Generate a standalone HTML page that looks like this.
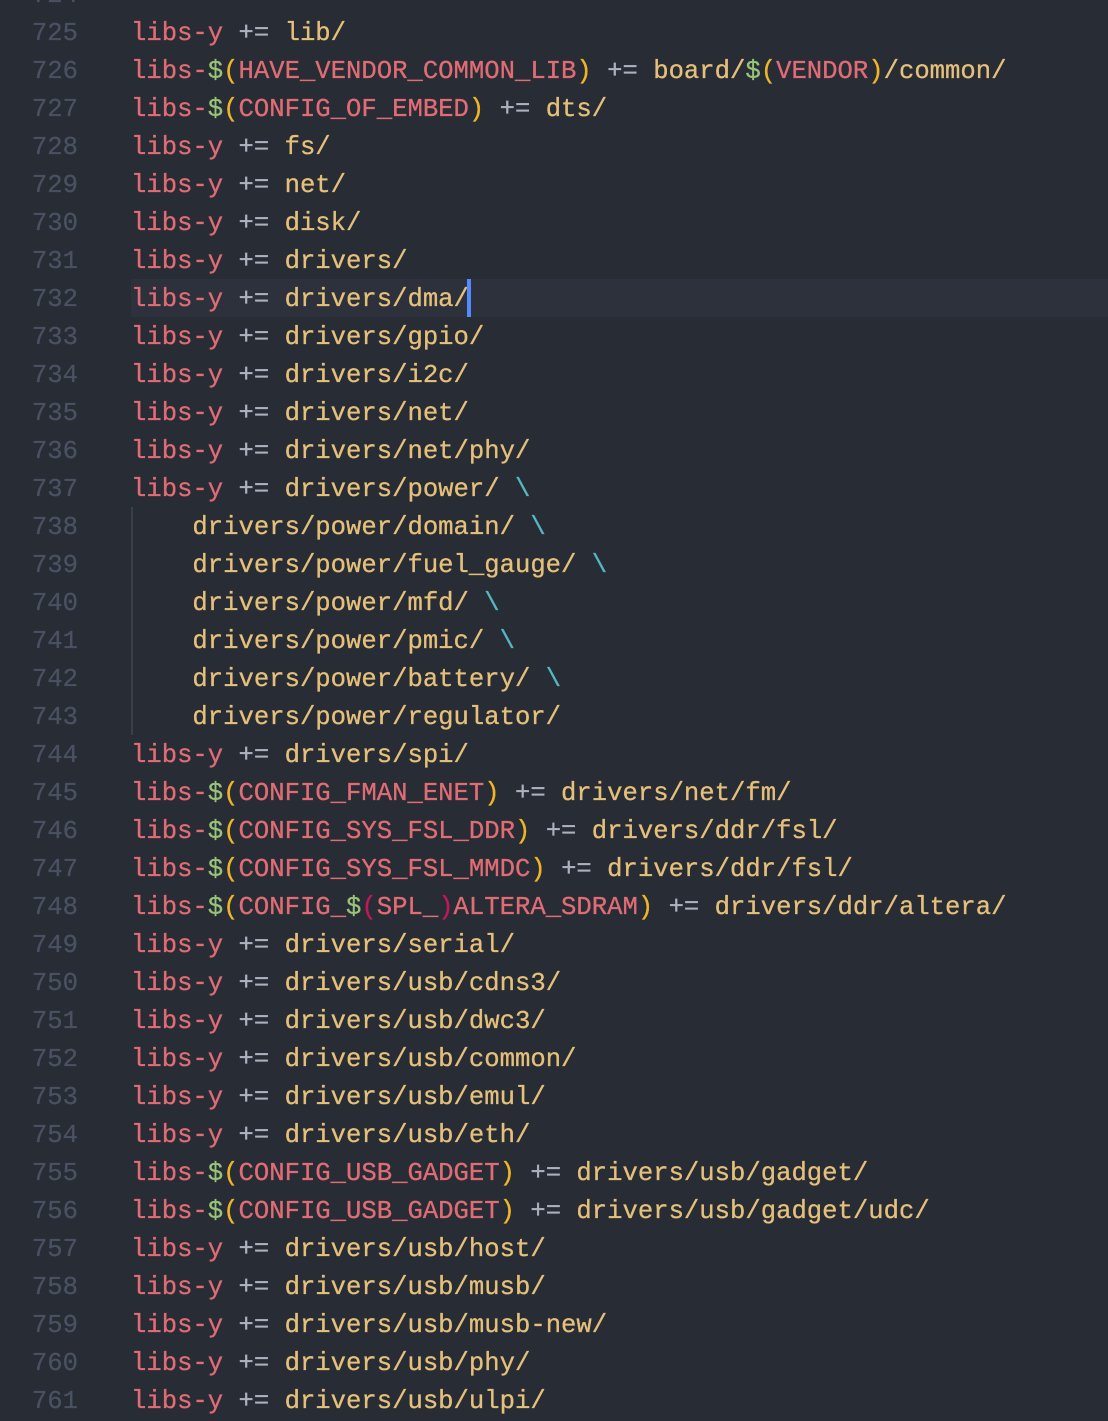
<!DOCTYPE html>
<html>
<head>
<meta charset="utf-8">
<style>
html,body{margin:0;padding:0;background:#282c34;}
#w{position:relative;width:1108px;height:1421px;overflow:hidden;background:#282c34;font-family:"Liberation Mono",monospace;font-size:25.6px;-webkit-text-stroke:0.3px;}
#hl{position:absolute;left:131px;top:279px;width:977px;height:38px;background:#2c313c;}
#cur{position:absolute;left:467px;top:279px;width:4px;height:38px;background:#528bff;}
#guide{position:absolute;left:131px;top:507px;width:2px;height:228px;background:#3b4048;}
.n,.l{position:absolute;height:38px;line-height:38px;white-space:pre;margin-top:2px;}
.n{left:0;width:78px;text-align:right;color:#495162;}
.l{left:131px;color:#e5c07b;}
.r{color:#e06c75}.o{color:#abb2bf}.g{color:#98c379}.b{color:#f0b429}.m{color:#c2185b}.c{color:#56b6c2}
</style>
</head>
<body>
<div id="w">
<div id="hl"></div><div id="guide"></div>
<div class="n" style="top:-25px">724</div>
<div class="n" style="top:13px">725</div><div class="l" style="top:13px"><span class="r">libs-y</span> <span class="o">+=</span> lib/</div>
<div class="n" style="top:51px">726</div><div class="l" style="top:51px"><span class="r">libs-</span><span class="g">$</span><span class="b">(</span><span class="r">HAVE_VENDOR_COMMON_LIB</span><span class="b">)</span> <span class="o">+=</span> board/<span class="g">$</span><span class="b">(</span><span class="r">VENDOR</span><span class="b">)</span>/common/</div>
<div class="n" style="top:89px">727</div><div class="l" style="top:89px"><span class="r">libs-</span><span class="g">$</span><span class="b">(</span><span class="r">CONFIG_OF_EMBED</span><span class="b">)</span> <span class="o">+=</span> dts/</div>
<div class="n" style="top:127px">728</div><div class="l" style="top:127px"><span class="r">libs-y</span> <span class="o">+=</span> fs/</div>
<div class="n" style="top:165px">729</div><div class="l" style="top:165px"><span class="r">libs-y</span> <span class="o">+=</span> net/</div>
<div class="n" style="top:203px">730</div><div class="l" style="top:203px"><span class="r">libs-y</span> <span class="o">+=</span> disk/</div>
<div class="n" style="top:241px">731</div><div class="l" style="top:241px"><span class="r">libs-y</span> <span class="o">+=</span> drivers/</div>
<div class="n" style="top:279px">732</div><div class="l" style="top:279px"><span class="r">libs-y</span> <span class="o">+=</span> drivers/dma/</div>
<div class="n" style="top:317px">733</div><div class="l" style="top:317px"><span class="r">libs-y</span> <span class="o">+=</span> drivers/gpio/</div>
<div class="n" style="top:355px">734</div><div class="l" style="top:355px"><span class="r">libs-y</span> <span class="o">+=</span> drivers/i2c/</div>
<div class="n" style="top:393px">735</div><div class="l" style="top:393px"><span class="r">libs-y</span> <span class="o">+=</span> drivers/net/</div>
<div class="n" style="top:431px">736</div><div class="l" style="top:431px"><span class="r">libs-y</span> <span class="o">+=</span> drivers/net/phy/</div>
<div class="n" style="top:469px">737</div><div class="l" style="top:469px"><span class="r">libs-y</span> <span class="o">+=</span> drivers/power/ <span class="c">\</span></div>
<div class="n" style="top:507px">738</div><div class="l" style="top:507px">    drivers/power/domain/ <span class="c">\</span></div>
<div class="n" style="top:545px">739</div><div class="l" style="top:545px">    drivers/power/fuel_gauge/ <span class="c">\</span></div>
<div class="n" style="top:583px">740</div><div class="l" style="top:583px">    drivers/power/mfd/ <span class="c">\</span></div>
<div class="n" style="top:621px">741</div><div class="l" style="top:621px">    drivers/power/pmic/ <span class="c">\</span></div>
<div class="n" style="top:659px">742</div><div class="l" style="top:659px">    drivers/power/battery/ <span class="c">\</span></div>
<div class="n" style="top:697px">743</div><div class="l" style="top:697px">    drivers/power/regulator/</div>
<div class="n" style="top:735px">744</div><div class="l" style="top:735px"><span class="r">libs-y</span> <span class="o">+=</span> drivers/spi/</div>
<div class="n" style="top:773px">745</div><div class="l" style="top:773px"><span class="r">libs-</span><span class="g">$</span><span class="b">(</span><span class="r">CONFIG_FMAN_ENET</span><span class="b">)</span> <span class="o">+=</span> drivers/net/fm/</div>
<div class="n" style="top:811px">746</div><div class="l" style="top:811px"><span class="r">libs-</span><span class="g">$</span><span class="b">(</span><span class="r">CONFIG_SYS_FSL_DDR</span><span class="b">)</span> <span class="o">+=</span> drivers/ddr/fsl/</div>
<div class="n" style="top:849px">747</div><div class="l" style="top:849px"><span class="r">libs-</span><span class="g">$</span><span class="b">(</span><span class="r">CONFIG_SYS_FSL_MMDC</span><span class="b">)</span> <span class="o">+=</span> drivers/ddr/fsl/</div>
<div class="n" style="top:887px">748</div><div class="l" style="top:887px"><span class="r">libs-</span><span class="g">$</span><span class="b">(</span><span class="r">CONFIG_</span><span class="g">$</span><span class="m">(</span><span class="r">SPL_</span><span class="m">)</span><span class="r">ALTERA_SDRAM</span><span class="b">)</span> <span class="o">+=</span> drivers/ddr/altera/</div>
<div class="n" style="top:925px">749</div><div class="l" style="top:925px"><span class="r">libs-y</span> <span class="o">+=</span> drivers/serial/</div>
<div class="n" style="top:963px">750</div><div class="l" style="top:963px"><span class="r">libs-y</span> <span class="o">+=</span> drivers/usb/cdns3/</div>
<div class="n" style="top:1001px">751</div><div class="l" style="top:1001px"><span class="r">libs-y</span> <span class="o">+=</span> drivers/usb/dwc3/</div>
<div class="n" style="top:1039px">752</div><div class="l" style="top:1039px"><span class="r">libs-y</span> <span class="o">+=</span> drivers/usb/common/</div>
<div class="n" style="top:1077px">753</div><div class="l" style="top:1077px"><span class="r">libs-y</span> <span class="o">+=</span> drivers/usb/emul/</div>
<div class="n" style="top:1115px">754</div><div class="l" style="top:1115px"><span class="r">libs-y</span> <span class="o">+=</span> drivers/usb/eth/</div>
<div class="n" style="top:1153px">755</div><div class="l" style="top:1153px"><span class="r">libs-</span><span class="g">$</span><span class="b">(</span><span class="r">CONFIG_USB_GADGET</span><span class="b">)</span> <span class="o">+=</span> drivers/usb/gadget/</div>
<div class="n" style="top:1191px">756</div><div class="l" style="top:1191px"><span class="r">libs-</span><span class="g">$</span><span class="b">(</span><span class="r">CONFIG_USB_GADGET</span><span class="b">)</span> <span class="o">+=</span> drivers/usb/gadget/udc/</div>
<div class="n" style="top:1229px">757</div><div class="l" style="top:1229px"><span class="r">libs-y</span> <span class="o">+=</span> drivers/usb/host/</div>
<div class="n" style="top:1267px">758</div><div class="l" style="top:1267px"><span class="r">libs-y</span> <span class="o">+=</span> drivers/usb/musb/</div>
<div class="n" style="top:1305px">759</div><div class="l" style="top:1305px"><span class="r">libs-y</span> <span class="o">+=</span> drivers/usb/musb-new/</div>
<div class="n" style="top:1343px">760</div><div class="l" style="top:1343px"><span class="r">libs-y</span> <span class="o">+=</span> drivers/usb/phy/</div>
<div class="n" style="top:1381px">761</div><div class="l" style="top:1381px"><span class="r">libs-y</span> <span class="o">+=</span> drivers/usb/ulpi/</div>
<div id="cur"></div>
</div>
</body>
</html>
